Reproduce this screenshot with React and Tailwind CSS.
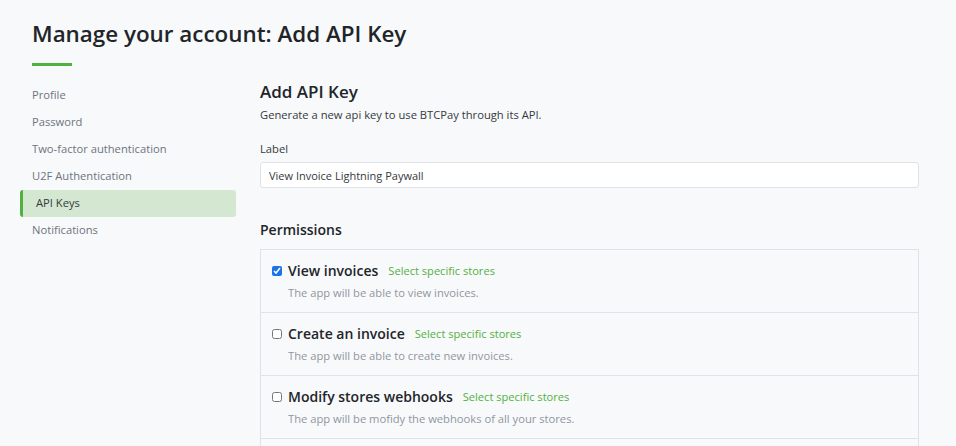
import { useState } from 'react'

const NAV_ITEMS = [
  'Profile',
  'Password',
  'Two-factor authentication',
  'U2F Authentication',
  'API Keys',
  'Notifications',
]

const PERMISSIONS = [
  {
    id: 'view-invoices',
    title: 'View invoices',
    description: 'The app will be able to view invoices.',
    checked: true,
  },
  {
    id: 'create-invoice',
    title: 'Create an invoice',
    description: 'The app will be able to create new invoices.',
    checked: false,
  },
  {
    id: 'modify-webhooks',
    title: 'Modify stores webhooks',
    description: 'The app will be mofidy the webhooks of all your stores.',
    checked: false,
  },
  {
    id: 'modify-stores',
    title: 'Modify your stores',
    description: 'The app will be able to modify your stores.',
    checked: false,
  },
]

function SideNav({ active }) {
  return (
    <nav className="mt-[2px] flex w-[216px] shrink-0 flex-col">
      {NAV_ITEMS.map((item) =>
        item === active ? (
          <a
            key={item}
            className="flex h-[27px] items-center rounded-[3px] border-l-[3px] border-[#51b13e] bg-[#d3e7d1] pl-[13px] text-[11.2px] text-[#343a40]"
          >
            {item}
          </a>
        ) : (
          <a
            key={item}
            className="flex h-[27px] items-center pl-[12px] text-[11.2px] text-[#6c757d]"
          >
            {item}
          </a>
        ),
      )}
    </nav>
  )
}

function PermissionRow({ permission }) {
  const [checked, setChecked] = useState(permission.checked)

  return (
    <div className="flex h-[63px] flex-col border-b border-[#dfe3e8] pl-[11px] pt-[11px] last:border-b-0">
      <label className="flex items-center">
        <input
          type="checkbox"
          checked={checked}
          onChange={(event) => setChecked(event.target.checked)}
          className="m-0 h-[10px] w-[10px] accent-[#1a73e8]"
        />
        <span className="ml-[6px] text-[14px] font-semibold leading-[20px] text-[#212529]">
          {permission.title}
        </span>
        <a className="ml-[10px] text-[11.1px] leading-[16px] text-[#51b13e]">
          Select specific stores
        </a>
      </label>
      <p className="mt-[4px] pl-[16px] text-[11.2px] leading-[16px] text-[#8f979e]">
        {permission.description}
      </p>
    </div>
  )
}

export default function App() {
  return (
    <main className="h-[446px] overflow-hidden bg-[#f8f9fb] font-['Open_Sans',sans-serif]">
      <div className="px-[32px] pt-[18px]">
        <h2 className="text-[22.4px] font-semibold leading-[32px] text-[#212529]">
          Manage your account: Add API Key
        </h2>
        <hr className="mt-[13px] w-[40px] border-0 border-t-[3px] border-[#51b13e]" />
      </div>

      <div className="mt-[14px] flex gap-[24px] pl-[20px] pr-[37px]">
        <SideNav active="API Keys" />

        <section className="flex min-w-0 flex-1 flex-col">
          <h4 className="text-[17px] font-semibold leading-[24px] text-[#212529]">
            Add API Key
          </h4>
          <p className="mt-[3px] text-[11.2px] leading-[16px] text-[#343a40]">
            Generate a new api key to use BTCPay through its API.
          </p>

          <label
            className="mt-[18px] text-[11.2px] leading-[16px] text-[#343a40]"
            htmlFor="label"
          >
            Label
          </label>
          <input
            id="label"
            readOnly
            value="View Invoice Lightning Paywall"
            className="mt-[5px] h-[26px] w-full rounded-[3px] border border-[#dfe3e8] bg-white px-[8px] text-[11px] text-[#343a40] outline-none"
          />

          <h5 className="mt-[31px] text-[14px] font-semibold leading-[21px] text-[#212529]">
            Permissions
          </h5>
          <div className="mt-[9px] border border-[#dfe3e8]">
            {PERMISSIONS.map((permission) => (
              <PermissionRow key={permission.id} permission={permission} />
            ))}
          </div>
        </section>
      </div>
    </main>
  )
}
